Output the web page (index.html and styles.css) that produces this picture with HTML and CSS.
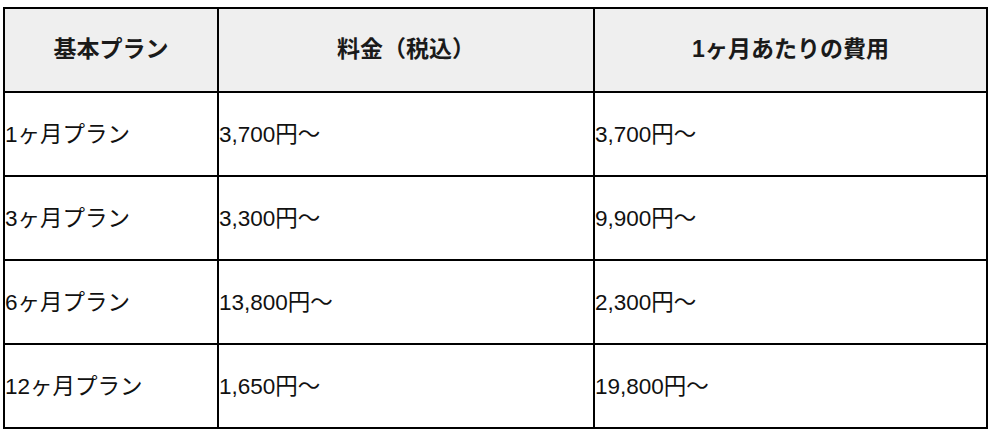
FILE: index.html
```html
<!DOCTYPE html>
<html lang="ja">
<head>
<meta charset="utf-8">
<title>料金プラン</title>
<link rel="stylesheet" href="styles.css">
</head>
<body>
<table class="price-table">
  <colgroup>
    <col class="col-plan">
    <col class="col-price">
    <col class="col-monthly">
  </colgroup>
  <thead>
    <tr>
      <th>基本プラン</th>
      <th>料金（税込）</th>
      <th>1ヶ月あたりの費用</th>
    </tr>
  </thead>
  <tbody>
    <tr>
      <td>1ヶ月プラン</td>
      <td>3,700円〜</td>
      <td>3,700円〜</td>
    </tr>
    <tr>
      <td>3ヶ月プラン</td>
      <td>3,300円〜</td>
      <td>9,900円〜</td>
    </tr>
    <tr>
      <td>6ヶ月プラン</td>
      <td>13,800円〜</td>
      <td>2,300円〜</td>
    </tr>
    <tr>
      <td>12ヶ月プラン</td>
      <td>1,650円〜</td>
      <td>19,800円〜</td>
    </tr>
  </tbody>
</table>
</body>
</html>
```
FILE: styles.css
```css
html, body {
  margin: 0;
  padding: 0;
  background: #fff;
}

body {
  padding: 7px 0 0 3px;
  font-family: "Liberation Sans", Arial, "Noto Sans CJK JP", sans-serif;
  font-size: 22.5px;
  color: #111;
}

.price-table {
  border-collapse: collapse;
  table-layout: fixed;
  width: 985px;
  border: 2px solid #000;
}

.col-plan { width: 214px; }
.col-price { width: 376px; }
.col-monthly { width: 393px; }

.price-table th,
.price-table td {
  border: 2px solid #000;
  padding: 0;
  height: 84px;
  box-sizing: border-box;
  vertical-align: middle;
  text-align: left;
  line-height: 1.2;
}

.price-table th {
  background: #efefef;
  font-weight: bold;
  font-size: 23px;
  text-align: center;
  color: #1a1a1a;
}
```
